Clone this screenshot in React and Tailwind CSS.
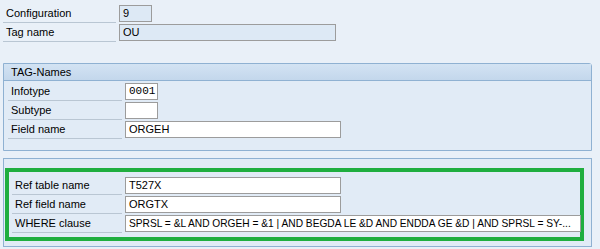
import React from 'react';

function Field({ label, value, width, readOnly, mono, small, labelWidth = 'w-[113px]' }) {
  return (
    <div className="flex h-[19px] items-center">
      <div className={`${labelWidth} h-[18px] shrink-0 border-b border-[#b9c6d3] pl-[3px] leading-[17px]`}>
        {label}
      </div>
      <div
        className={`${width} ml-[3px] h-[17px] shrink-0 overflow-hidden whitespace-nowrap border border-[#9c9c9c] px-[3px] leading-[15px] ${
          readOnly ? 'bg-[#dde9f5]' : 'bg-white'
        } ${mono ? "font-['Liberation_Mono',monospace] text-[11px]" : ''} ${small ? 'text-[10.2px]' : ''}`}
      >
        {value}
      </div>
    </div>
  );
}

export default function App() {
  return (
    <div className="h-[249px] w-[600px] bg-[#e9f0f8] font-['Liberation_Sans',Arial,sans-serif] text-[11px] text-black">
      {/* header fields */}
      <div className="pl-[3px] pt-[4px]">
        <Field label="Configuration" value="9" width="w-[33px]" readOnly />
        <Field label="Tag name" value="OU" width="w-[217px]" readOnly />
      </div>

      {/* TAG-Names group */}
      <div className="ml-[3px] mt-[21px] h-[88px] w-[589px] rounded-tr-[3px] border border-[#8fb1d2] bg-[#e1ebf6]">
        <div className="h-[17px] border-b border-[#8fb1d2] bg-gradient-to-b from-[#d3e3f3] to-[#c3d7ec] pl-[7px] leading-[16px]">
          TAG-Names
        </div>
        <div className="pl-[4px] pt-[1px]">
          <Field label="Infotype" value="0001" width="w-[33px]" mono labelWidth="w-[114px]" />
          <Field label="Subtype" value="" width="w-[33px]" labelWidth="w-[114px]" />
          <Field label="Field name" value="ORGEH" width="w-[216px]" labelWidth="w-[114px]" />
        </div>
      </div>

      {/* reference group */}
      <div className="ml-[3px] mt-[7px] h-[89px] w-[589px] border border-[#8fb1d2] bg-[#e1ebf6] pl-[1px] pt-[9px]">
        <div className="h-[73px] w-[579px] border-[4px] border-[#1fae3f] pl-[3px] pt-[4px]">
          <Field label="Ref table name" value="T527X" width="w-[216px]" labelWidth="w-[110px]" />
          <Field label="Ref field name" value="ORGTX" width="w-[216px]" labelWidth="w-[110px]" />
          <Field
            label="WHERE clause"
            value="SPRSL = &L AND ORGEH = &1 | AND BEGDA LE &D AND ENDDA GE &D | AND SPRSL = SY-..."
            width="w-[456px]"
            labelWidth="w-[110px]"
            small
          />
        </div>
      </div>
    </div>
  );
}
